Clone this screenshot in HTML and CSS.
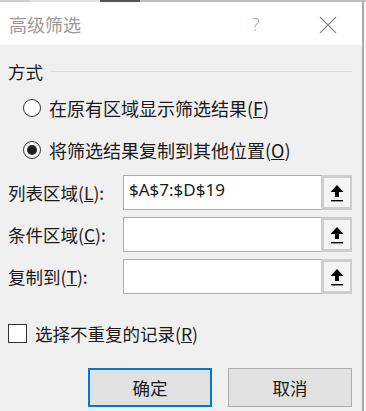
FILE: index.html
```html
<!DOCTYPE html>
<html lang="zh-CN">
<head>
    <meta charset="UTF-8">
    <title>高级筛选</title>
    <link rel="stylesheet" href="styles.css">
</head>
<body>
    <div class="strip"></div>

    <!-- 高级筛选 对话框 -->
    <div class="dialog">
        <div class="titlebar">
            <span class="title">高级筛选</span>
            <span class="help">?</span>
            <span class="close">
                <svg width="18" height="18" viewBox="0 0 18 18">
                    <path d="M1 1 L17 17 M17 1 L1 17" stroke="#8a8a8a" stroke-width="1.2" fill="none"/>
                </svg>
            </span>
        </div>

        <div class="content">
            <div class="group-head">
                <span>方式</span>
                <div class="group-line"></div>
            </div>

            <div class="radios">
                <div class="radio-row">
                    <span class="radio"></span>
                    <span>在原有区域显示筛选结果(<u>F</u>)</span>
                </div>
                <div class="radio-row">
                    <span class="radio checked"></span>
                    <span>将筛选结果复制到其他位置(<u>O</u>)</span>
                </div>
            </div>

            <div class="fields">
                <div class="field">
                    <span class="label">列表区域(<u>L</u>):</span>
                    <div class="range">
                        <span class="range-text">$A$7:$D$19</span>
                        <span class="pick">
                            <svg width="16" height="20" viewBox="0 0 16 20">
                                <path d="M8 2 L14.5 9 L10 9 L10 14 L6 14 L6 9 L1.5 9 Z" fill="#000"/>
                                <rect x="2" y="17" width="12" height="1.4" fill="#000"/>
                            </svg>
                        </span>
                    </div>
                </div>
                <div class="field">
                    <span class="label">条件区域(<u>C</u>):</span>
                    <div class="range">
                        <span class="range-text"></span>
                        <span class="pick">
                            <svg width="16" height="20" viewBox="0 0 16 20">
                                <path d="M8 2 L14.5 9 L10 9 L10 14 L6 14 L6 9 L1.5 9 Z" fill="#000"/>
                                <rect x="2" y="17" width="12" height="1.4" fill="#000"/>
                            </svg>
                        </span>
                    </div>
                </div>
                <div class="field">
                    <span class="label">复制到(<u>T</u>):</span>
                    <div class="range">
                        <span class="range-text"></span>
                        <span class="pick">
                            <svg width="16" height="20" viewBox="0 0 16 20">
                                <path d="M8 2 L14.5 9 L10 9 L10 14 L6 14 L6 9 L1.5 9 Z" fill="#000"/>
                                <rect x="2" y="17" width="12" height="1.4" fill="#000"/>
                            </svg>
                        </span>
                    </div>
                </div>
            </div>

            <div class="check-row">
                <span class="checkbox"></span>
                <span>选择不重复的记录(<u>R</u>)</span>
            </div>

            <div class="buttons">
                <button class="btn primary">确定</button>
                <button class="btn">取消</button>
            </div>
        </div>
    </div>
</body>
</html>
```

FILE: styles.css
```css
/* 页面 */
body {
    margin: 0;
    width: 366px;
    height: 411px;
    overflow: hidden;
    background: #f7f7f7;
    font-family: "Noto Sans CJK SC", "Noto Sans", sans-serif;
    color: #1a1a1a;
}

.strip {
    height: 2px;
    background: linear-gradient(90deg, #cfcfcf 0, #cfcfcf 30px, #e0e0e0 30px, #e0e0e0 100px, #555 100px, #555 140px, #bdbdbd 140px, #bdbdbd 366px);
}

.dialog {
    width: 362px;
    border-right: 2px solid #a9a9a9;
    background: #f0f0f0;
}

/* 标题栏 */
.titlebar {
    height: 43px;
    background: #fff;
    display: flex;
    align-items: center;
    padding-left: 9px;
}

.title {
    font-size: 18px;
    color: #999;
    flex: 1;
}

.help {
    font-family: "Noto Sans", sans-serif;
    font-size: 18px;
    font-weight: 300;
    color: #aaa;
    width: 14px;
    margin-right: 53px;
}

.close {
    width: 18px;
    height: 18px;
    margin-right: 25px;
}

/* 内容 */
.content {
    padding: 16px 10px 4px 8px;
    font-size: 17.5px;
}

.group-head {
    display: flex;
    align-items: center;
    height: 20px;
}

.group-line {
    flex: 1;
    height: 1px;
    background: #d9d9d9;
    margin-left: 8px;
}

.radios {
    margin-top: 6px;
}

.radio-row {
    display: flex;
    align-items: center;
    height: 42px;
    padding-left: 15px;
    font-size: 18px;
}

.radio {
    width: 16px;
    height: 16px;
    border: 1px solid #333;
    border-radius: 50%;
    background: #fff;
    margin-right: 8px;
    display: flex;
    align-items: center;
    justify-content: center;
}

.radio.checked::after {
    content: "";
    width: 10px;
    height: 10px;
    border-radius: 50%;
    background: #222;
}

.fields {
    margin-top: 4px;
    display: flex;
    flex-direction: column;
    gap: 7px;
}

.field {
    display: flex;
    align-items: center;
    height: 35px;
}

.label {
    width: 115px;
}

.range {
    width: 229px;
    height: 35px;
    box-sizing: border-box;
    border: 1px solid #ababab;
    background: #fff;
    display: flex;
}

.range-text {
    flex: 1;
    font-family: "Noto Sans", sans-serif;
    font-size: 17px;
    padding-left: 5px;
    line-height: 28px;
}

.pick {
    width: 31px;
    box-sizing: border-box;
    border: 3px solid #cdcdcd;
    border-right-width: 2px;
    margin: -1px -1px -1px 0;
    background: #f4f4f4;
    display: flex;
    align-items: center;
    justify-content: center;
}

.check-row {
    display: flex;
    align-items: center;
    height: 20px;
    margin-top: 29px;
}

.checkbox {
    width: 17px;
    height: 17px;
    border: 1px solid #333;
    background: #fff;
    margin-right: 8px;
}

.buttons {
    display: flex;
    justify-content: flex-end;
    gap: 16px;
    margin-top: 25px;
}

.btn {
    width: 124px;
    height: 39px;
    background: #e1e1e1;
    border: 1px solid #adadad;
    font-family: "Noto Sans CJK SC", sans-serif;
    font-size: 17.5px;
    color: #1a1a1a;
    padding: 0;
}

.btn.primary {
    border: 2px solid #0078d7;
}
```
